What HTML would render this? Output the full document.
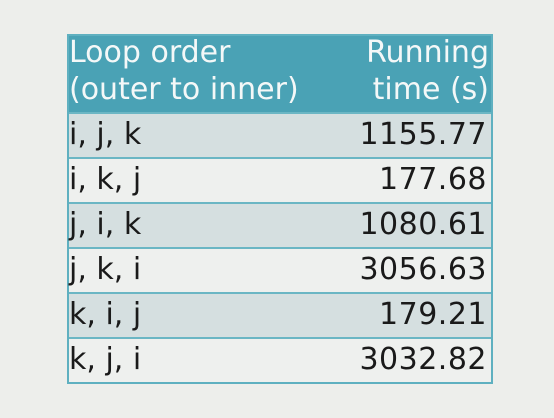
<!DOCTYPE html>
<html><head><style>
html,body{margin:0;padding:0;width:554px;height:418px;background:#edeeeb;overflow:hidden;}
.t{position:absolute;left:67px;top:34px;width:426px;border:2px solid #5fb0c0;box-sizing:border-box;font-family:"DejaVu Sans","Liberation Sans",sans-serif;}
.h{background:#4aa2b5;color:#f4f8f8;height:76px;position:relative;font-size:30px;line-height:37px;}
.h .l{position:absolute;left:0px;top:-2px;}
.h .r{position:absolute;right:2px;top:-2px;text-align:right;}
.row{height:45px;border-top:2px solid #6bb6c4;box-sizing:border-box;position:relative;font-size:30px;color:#1a1a1a;background:#eef0ee;}
.row.s{background:#d5dfe0;}
.row .l{position:absolute;left:0px;top:3px;}
.row .r{position:absolute;right:4px;top:3px;letter-spacing:0.5px;}
</style></head><body>
<div class="t">
<div class="h"><div class="l">Loop order<br>(outer to inner)</div><div class="r">Running<br>time (s)</div></div>
<div class="row s"><span class="l">i, j, k</span><span class="r">1155.77</span></div>
<div class="row"><span class="l">i, k, j</span><span class="r">177.68</span></div>
<div class="row s"><span class="l">j, i, k</span><span class="r">1080.61</span></div>
<div class="row"><span class="l">j, k, i</span><span class="r">3056.63</span></div>
<div class="row s"><span class="l">k, i, j</span><span class="r">179.21</span></div>
<div class="row"><span class="l">k, j, i</span><span class="r">3032.82</span></div>
</div>
</body></html>
